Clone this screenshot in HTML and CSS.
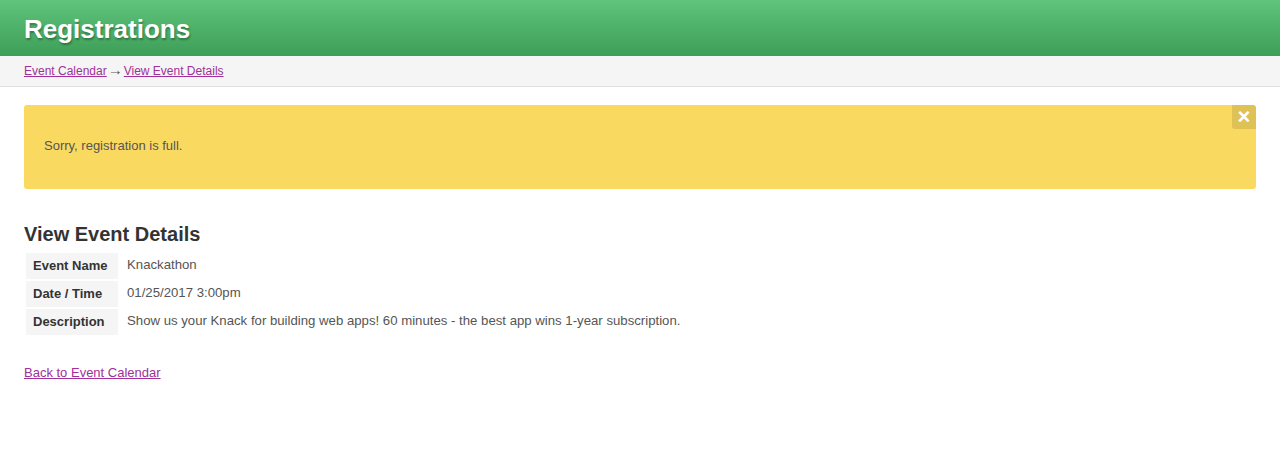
FILE: index.html
```html
<!DOCTYPE html>
<html lang="en">
<head>
    <meta charset="UTF-8">
    <meta name="viewport" content="width=device-width, initial-scale=1.0">
    <title>Registrations</title>
    <link rel="stylesheet" href="styles.css">
</head>
<body>

<div class="header">
    <h1>Registrations</h1>
</div>

<div class="crumbs">
    <a href="#">Event Calendar</a><span class="arrow">&rarr;</span><a href="#">View Event Details</a>
</div>

<div class="content">
    <div class="alert">
        <p>Sorry, registration is full.</p>
        <a href="#" class="close">&times;</a>
    </div>

    <h2>View Event Details</h2>
    <table class="details">
        <tr>
            <th>Event Name</th>
            <td>Knackathon</td>
        </tr>
        <tr>
            <th>Date / Time</th>
            <td>01/25/2017 3:00pm</td>
        </tr>
        <tr>
            <th>Description</th>
            <td>Show us your Knack for building web apps! 60 minutes - the best app wins 1-year subscription.</td>
        </tr>
    </table>

    <a href="#" class="back">Back to Event Calendar</a>
</div>

</body>
</html>
```

FILE: styles.css
```css
body {
    margin: 0;
    font-family: "Liberation Sans", Arial, sans-serif;
    color: #555;
    background: #fff;
}

a {
    color: #a0309a;
}

.header {
    height: 56px;
    padding: 3px 24px 0;
    box-sizing: border-box;
    background: linear-gradient(#5fc47d, #3d9e57);
    display: flex;
    align-items: center;
}

.header h1 {
    margin: 0;
    font-size: 26px;
    font-weight: bold;
    color: #fff;
    text-shadow: 1px 2px 2px rgba(0, 0, 0, 0.3);
}

.crumbs {
    height: 30px;
    padding: 0 24px;
    background: #f5f5f5;
    border-bottom: 1px solid #e0e0e0;
    font-size: 12px;
    line-height: 31px;
}

.crumbs .arrow {
    color: #555;
    font-size: 15px;
    line-height: 1;
    margin: 0 1px;
}

.content {
    padding: 18px 24px;
}

.alert {
    position: relative;
    background: #f9d95f;
    border-radius: 3px;
    padding: 31px 20px 33px;
    font-size: 13px;
    color: #555;
}

.alert p {
    margin: 0;
    line-height: 20px;
}

.alert .close {
    position: absolute;
    top: 0;
    right: 0;
    width: 24px;
    height: 24px;
    background: rgba(0, 0, 0, 0.1);
    border-radius: 0 3px 0 3px;
    color: #fff;
    font-size: 22px;
    font-weight: bold;
    line-height: 24px;
    text-align: center;
    text-decoration: none;
}

h2 {
    margin: 34px 0 5px;
    font-size: 20px;
    color: #333;
}

.details {
    border-spacing: 2px;
    font-size: 13px;
    margin-bottom: 26px;
}

.details th {
    background: #f5f5f5;
    color: #333;
    text-align: left;
    padding: 5px 7px;
    width: 78px;
    line-height: 16px;
}

.details td {
    padding: 4px 7px 6px;
    font-size: 13.2px;
    line-height: 16px;
    vertical-align: top;
}

.back {
    font-size: 13px;
}
```
